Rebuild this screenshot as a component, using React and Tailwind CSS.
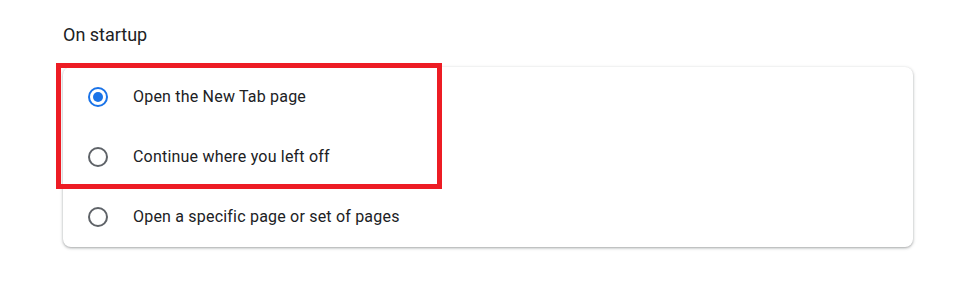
const options = [
  { label: "Open the New Tab page", checked: true },
  { label: "Continue where you left off", checked: false },
  { label: "Open a specific page or set of pages", checked: false },
];

const Radio = ({ checked }) => (
  <div
    className={`w-5 h-5 rounded-full border-2 flex items-center justify-center shrink-0 ${
      checked ? "border-[#1a73e8]" : "border-[#5f6368]"
    }`}
  >
    {checked && <div className="w-[10px] h-[10px] rounded-full bg-[#1a73e8]"></div>}
  </div>
);

export default function App() {
  return (
    <div className="w-[965px] h-[294px] bg-white font-['Roboto',sans-serif] text-[#202124] pl-[63px] pt-[23px]">
      <h2 className="text-[18px] leading-6 font-normal">On startup</h2>
      <div className="relative mt-5 w-[850px] rounded-lg bg-white shadow-[0_1px_2px_rgba(60,64,67,0.3),0_1px_3px_1px_rgba(60,64,67,0.15)]">
        {options.map((opt) => (
          <div key={opt.label} className="flex items-center h-[60px] pl-[25px] gap-[25px]">
            <Radio checked={opt.checked} />
            <span className="text-[16px] tracking-[0.2px]">{opt.label}</span>
          </div>
        ))}
        <div className="absolute left-[-7px] top-[-4px] w-[386px] h-[126px] border-[5px] border-[#ed1c24] pointer-events-none"></div>
      </div>
    </div>
  );
}
